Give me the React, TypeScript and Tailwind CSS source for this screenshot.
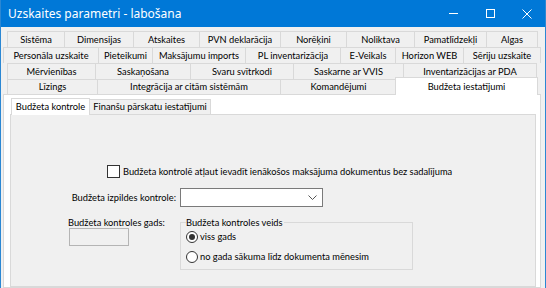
import React from "react";

const row1 = [
  { l: "Sistēma", w: "w-[58px]" },
  { l: "Dimensijas", w: "w-[70px]" },
  { l: "Atskaites", w: "w-[67px]" },
  { l: "PVN deklarācija", w: "w-[82px]" },
  { l: "Norēķini", w: "w-[67px]" },
  { l: "Noliktava", w: "w-[69px]" },
  { l: "Pamatlīdzekļi", w: "w-[73px]" },
  { l: "Algas", w: "w-[52px]" },
];
const row2 = [
  { l: "Personāla uzskaite", w: "w-[96px]" },
  { l: "Pieteikumi", w: "w-[55px]" },
  { l: "Maksājumu imports", w: "w-[94px]" },
  { l: "PL inventarizācija", w: "w-[96px]" },
  { l: "E-Veikals", w: "w-[56px]" },
  { l: "Horizon WEB", w: "w-[69px]" },
  { l: "Sēriju uzskaite", w: "w-[78px]" },
];
const row3 = [
  { l: "Mērvienības", w: "w-[89px]" },
  { l: "Saskaņošana", w: "w-[96px]" },
  { l: "Svaru svītrkodi", w: "w-[104px]" },
  { l: "Saskarne ar VVIS", w: "w-[111px]" },
  { l: "Inventarizācijas ar PDA", w: "w-[134px]" },
];
const row4 = [
  { l: "Līzings", w: "w-[91px]" },
  { l: "Integrācija ar citām sistēmām", w: "w-[184px]" },
  { l: "Komandējumi", w: "w-[117px]" },
];

function Row({ items, cls }: { items: { l: string; w: string }[]; cls: string }) {
  return (
    <div className={"flex " + cls}>
      {items.map((t, i) => (
        <div
          key={i}
          className={
            t.w +
            " h-full -mr-px flex items-center justify-center border border-b-0 border-[#d9d9d9] bg-[#f0f0f0] text-[#000] whitespace-nowrap"
          }
        >
          {t.l}
        </div>
      ))}
    </div>
  );
}

export default function App() {
  return (
    <div
      className="w-[546px] h-[288px] overflow-hidden bg-[#f0f0f0] border-x border-[#2b87d3] text-[9.3px] leading-none text-black flex flex-col"
      style={{ fontFamily: 'Lato, "Noto Sans", "Liberation Sans", sans-serif' }}
    >
      {/* title bar */}
      <div
        className="h-[27px] shrink-0 bg-[#0078d7] flex items-center text-white -mx-px"
        style={{ fontFamily: '"Noto Sans", "Liberation Sans", sans-serif' }}
      >
        <div className="pl-[8px] text-[12px] flex-1">Uzskaites parametri - labošana</div>
        <div className="w-[37px] h-full flex items-center justify-center">
          <div className="w-[9px] h-px bg-white" />
        </div>
        <div className="w-[36px] h-full flex items-center justify-center">
          <div className="w-[9px] h-[9px] border border-white" />
        </div>
        <div className="w-[38px] h-full flex items-center justify-center">
          <svg width="10" height="10" viewBox="0 0 10 10">
            <path d="M0.5 0.5 L9.5 9.5 M9.5 0.5 L0.5 9.5" stroke="white" strokeWidth="1" />
          </svg>
        </div>
      </div>

      {/* outer tab rows */}
      <div className="mt-[4px] flex flex-col">
        <Row items={row1} cls="h-[16px] pl-[6px]" />
        <Row items={row2} cls="h-[16px] pl-[2px]" />
        <Row items={row3} cls="h-[16px] pl-[6px]" />
        <div className="flex h-[15px] pl-[6px] items-end">
          <Row items={row4} cls="h-[15px]" />
          <div className="relative z-10 w-[143px] h-[18px] -mb-px -ml-[1px] flex items-start pt-[4px] justify-center border border-b-0 border-[#d9d9d9] bg-white whitespace-nowrap">
            Budžeta iestatījumi
          </div>
        </div>
      </div>

      {/* outer panel */}
      <div className="ml-[2px] mr-[4px] flex-1 bg-white border border-[#d9d9d9] pt-[2px] pl-[6px] pr-[4px] flex flex-col">
        <div className="flex items-end h-[17px] pl-px">
          <div className="relative z-10 w-[79px] h-[17px] -mb-px flex items-center justify-center border border-b-0 border-[#d9d9d9] bg-white whitespace-nowrap">
            Budžeta kontrole
          </div>
          <div className="w-[122px] h-[15px] -ml-px flex items-center justify-center border border-b-0 border-[#d9d9d9] bg-[#f0f0f0] whitespace-nowrap">
            Finanšu pārskatu iestatījumi
          </div>
        </div>
        <div className="flex-1 bg-[#f0f0f0] border border-[#d9d9d9] flex flex-col">
          {/* checkbox */}
          <div className="mt-[50px] ml-[96px] flex items-center h-[13px]">
            <div className="w-[13px] h-[13px] bg-white border border-[#333]" />
            <span className="ml-[3px] whitespace-nowrap">
              Budžeta kontrolē atļaut ievadīt ienākošos maksājuma dokumentus bez sadalījuma
            </span>
          </div>
          {/* select */}
          <div className="mt-[10px] flex items-center">
            <div className="w-[169px] text-right pr-[4px] whitespace-nowrap">Budžeta izpildes kontrole:</div>
            <div className="w-[143px] h-[19px] bg-white border border-[#7a7a7a] flex items-center justify-end pr-[5px]">
              <svg width="9" height="5" viewBox="0 0 9 5">
                <path d="M0.5 0.5 L4.5 4.5 L8.5 0.5" stroke="#555" strokeWidth="1" fill="none" />
              </svg>
            </div>
          </div>
          {/* bottom section */}
          <div className="mt-[10px] flex">
            <div className="ml-[57px] w-[112px] flex flex-col pt-px">
              <div className="whitespace-nowrap">Budžeta kontroles gads:</div>
              <div className="mt-[1px] ml-px w-[60px] h-[18px] bg-[#f0f0f0] border border-[#b4b4b4]" />
            </div>
            <div className="relative w-[233px] h-[48px] mt-[5px] border border-[#d9d9d9]">
              <div className="absolute -top-[5px] left-[5px] bg-[#f0f0f0] pr-[1px] whitespace-nowrap">
                Budžeta kontroles veids
              </div>
              <div className="pt-[8px] pl-[5px] flex flex-col gap-[8px]">
                <div className="flex items-center h-[12px]">
                  <div className="w-[12px] h-[12px] rounded-full border border-[#333] bg-white flex items-center justify-center">
                    <div className="w-[6px] h-[6px] rounded-full bg-[#333]" />
                  </div>
                  <span className="ml-[2px]">viss gads</span>
                </div>
                <div className="flex items-center h-[12px]">
                  <div className="w-[12px] h-[12px] rounded-full border border-[#333] bg-white" />
                  <span className="ml-[2px] whitespace-nowrap">no gada sākuma līdz dokumenta mēnesim</span>
                </div>
              </div>
            </div>
          </div>
        </div>
      </div>
    </div>
  );
}
